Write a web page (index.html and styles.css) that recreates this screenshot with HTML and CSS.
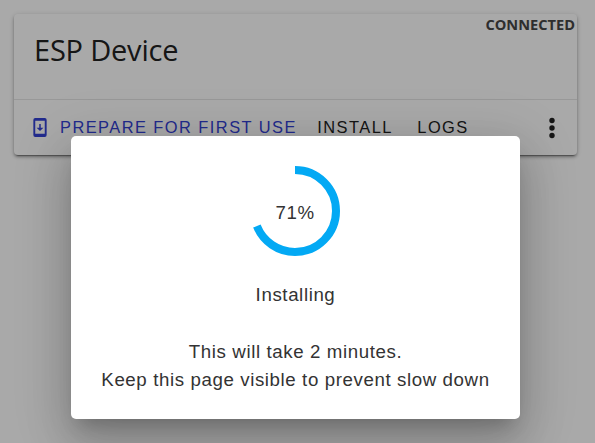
FILE: index.html
```html
<!DOCTYPE html>
<html lang="en">
<head>
<meta charset="utf-8">
<title>ESP Device</title>
<link rel="stylesheet" href="styles.css">
</head>
<body>
<main class="card">
  <header class="card-header">
    <h1 class="title">ESP Device</h1>
    <span class="status">CONNECTED</span>
  </header>
  <div class="actions">
    <svg class="device-icon" viewBox="0 0 14 20"><path fill-rule="evenodd" d="M2 0h10a2 2 0 0 1 2 2v16a2 2 0 0 1-2 2H2a2 2 0 0 1-2-2V2a2 2 0 0 1 2-2ZM2 3v13.500h10V3ZM6.200 6.200h1.600v4h2.800L7 13.800l-3.600-3.600h2.800Z"/></svg>
    <span class="action primary">PREPARE FOR FIRST USE</span>
    <span class="action install">INSTALL</span>
    <span class="action logs">LOGS</span>
    <svg class="menu-icon" viewBox="0 0 6 22"><circle cx="3" cy="3.500" r="2.700"/><circle cx="3" cy="11" r="2.700"/><circle cx="3" cy="18.500" r="2.700"/></svg>
  </div>
</main>
<div class="scrim">
  <section class="dialog">
    <div class="progress">
      <svg class="ring" viewBox="0 0 90 90"><circle cx="45" cy="45" r="41" pathLength="100" stroke-dasharray="69 100" transform="rotate(-90 45 45)"/></svg>
      <span class="percent">71%</span>
    </div>
    <p class="message">Installing</p>
    <p class="message hint">This will take 2 minutes.<br>Keep this page visible to prevent slow down</p>
  </section>
</div>
</body>
</html>
```
FILE: styles.css
```css
* { box-sizing: border-box; }
body {
  margin: 0;
  height: 443px;
  padding: 14px 18px 0 14px;
  overflow: hidden;
  background: #fafafa;
  font-family: "Liberation Sans", Arial, sans-serif;
}
.card {
  height: 141px;
  background: #fafafa;
  border-radius: 4px;
  box-shadow: 0 3px 1px -2px rgba(0,0,0,.3), 0 2px 3px rgba(0,0,0,.3), 0 1px 6px rgba(0,0,0,.14);
}
.card-header {
  display: flex;
  justify-content: space-between;
  height: 86px;
  padding: 0 2px 0 20px;
  border-bottom: 1px solid #e0e0e0;
}
.title {
  margin: 16px 0 0;
  font: 400 29px/40px "Open Sans", "Noto Sans", sans-serif;
  letter-spacing: -.2px;
  color: #212121;
}
.status {
  font: 700 14.600px/21px "Open Sans", "Noto Sans", sans-serif;
  color: #444;
}
.actions {
  display: flex;
  align-items: center;
  height: 55px;
  padding: 0 22px 0 19px;
}
.device-icon { width: 14px; height: 19px; fill: #3340d0; }
.action {
  margin-top: -1px;
  font-size: 16.400px;
  line-height: 20px;
  letter-spacing: 1.460px;
  color: #212121;
  white-space: nowrap;
}
.primary { margin-left: 13px; color: #3340d0; }
.install { margin-left: 20.500px; }
.logs { margin-left: 24.500px; }
.menu-icon { width: 6px; height: 22px; margin-left: auto; fill: #212121; }
.scrim {
  position: absolute;
  inset: 0;
  display: flex;
  align-items: flex-start;
  background: rgba(0,0,0,.32);
}
.dialog {
  width: 449px;
  height: 283px;
  margin: 136px 0 0 71px;
  padding-top: 30px;
  border-radius: 5px;
  background: #fff;
  box-shadow: 0 13px 18px -8px rgba(0,0,0,.2), 0 28px 45px 3px rgba(0,0,0,.14), 0 10px 54px 9px rgba(0,0,0,.12);
  text-align: center;
  font-size: 18.700px;
  line-height: 28px;
  letter-spacing: .600px;
  color: #333;
}
.progress {
  display: grid;
  place-items: center;
  width: 90px;
  height: 90px;
  margin: 0 0 25px 179px;
}
.ring, .percent { grid-area: 1 / 1; }
.ring { width: 90px; height: 90px; fill: none; stroke: #03a9f4; stroke-width: 8; }
.percent { margin-top: 3px; }
.message { margin: 0; }
.hint { margin-top: 29px; }
```
